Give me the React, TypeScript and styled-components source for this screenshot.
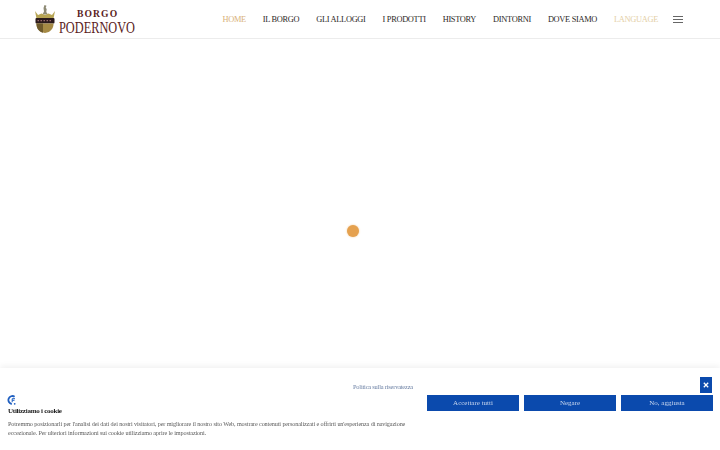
import React from "react";
import styled, { createGlobalStyle } from "styled-components";

const Global = createGlobalStyle`
  html, body { margin: 0; padding: 0; background: #fff; overflow: hidden; }
  body { font-family: "Liberation Serif", "Times New Roman", serif; }
  * { box-sizing: border-box; }
`;
const Page = styled.div`
  width: 720px; height: 450px; display: flex; flex-direction: column; background: #fff;
`;
const Header = styled.header`
  height: 39px; flex: none; display: flex; align-items: center;
  padding: 0 37px 1px 35px; border-bottom: 1px solid #ececec; background: #fff;
`;
const Logo = styled.a`
  display: flex; align-items: center; gap: 4px; width: 100px; height: 38px; flex: none;
`;
const Wordmark = styled.div`
  display: flex; flex-direction: column; width: 76px; color: #5a1c22; padding-top: 7px;
`;
const Borgo = styled.span`
  font-size: 9.6px; font-weight: 700; letter-spacing: 1.1px; line-height: 10px; margin-left: 18px; white-space: nowrap;
`;
const Podernovo = styled.span`
  display: block; font-size: 16px; line-height: 15px; margin-top: 1px; white-space: nowrap; transform: scaleX(0.77); transform-origin: left center;
`;
const Nav = styled.nav`
  margin-left: auto; display: flex; align-items: center; gap: 17px; padding-top: 1px;
`;
const NavLink = styled.a<{ $active?: boolean; $soft?: boolean }>`
  font-size: 8.4px; white-space: nowrap; letter-spacing: -0.32px; text-transform: uppercase;
  color: ${(p) => (p.$active ? "#d9b27a" : p.$soft ? "#e4cfa6" : "#2e2a27")};
`;
const Burger = styled.button`
  border: 0; background: none; padding: 0; margin-left: -2px; width: 10px; height: 7px;
  display: flex; flex-direction: column; justify-content: space-between;
  span { display: block; height: 1px; background: #666; }
`;
const Main = styled.main`flex: 1; background: #fff;`;
const Loader = styled.div`
  position: fixed; left: 347px; top: 225px; width: 12px; height: 12px; border-radius: 50%;
  background: #e5a14f; box-shadow: 0 0 2px #f0c48e;
`;
const Banner = styled.section`
  position: fixed; left: 0; right: 0; bottom: 0; height: 82px; background: #fff;
  box-shadow: 0 -2px 6px rgba(0,0,0,.06);
  display: grid; grid-template-columns: 1fr 286px; column-gap: 15px;
  padding: 9px 7px 0 8px;
`;
const Copy = styled.div`
  display: flex; flex-direction: column; padding-top: 18px; min-width: 0;
`;
const CookieMark = styled.svg`
  display: block; flex: none; margin-left: -1px;
`;
const Title = styled.h2`
  margin: 1px 0 3px; font-size: 7px; letter-spacing: -0.25px; line-height: 10px; font-weight: 700; color: #222;
`;
const Body = styled.p`
  margin: 0; font-size: 6.2px; letter-spacing: -0.12px; line-height: 9px; color: #5c5c5c; width: 398px;
`;
const Side = styled.div`display: flex; flex-direction: column;`;
const TopRow = styled.div`
  height: 18px; display: flex; align-items: flex-start; justify-content: flex-end; position: relative;
`;
const Policy = styled.a`
  position: absolute; left: -74px; top: 5px; font-size: 6.4px; letter-spacing: -0.2px; line-height: 10px; color: #6a7fa3; white-space: nowrap;
`;
const Close = styled.button`
  width: 12px; height: 16px; margin-right: 1px; border: 0; padding: 0; background: #0b4aad; display: flex; align-items: center; justify-content: center;
`;
const Buttons = styled.div`display: grid; grid-template-columns: repeat(3, 92px); gap: 5px;`;
const Action = styled.button`
  height: 16px; border: 0; padding: 0; background: #0b4aad; color: #c8d6ee;
  font-family: inherit; font-size: 7px;
`;

export default function App() {
  return (
    <Page>
      <Global />
      <Header>
        <Logo>
          <svg width="20" height="28" viewBox="0 0 20 28" style={{ flex: "none" }}>
            <path d="M9.5 0l2 .8-.8 2 1 1.2-.4 3 1.6 2.5H7.5L9 6.5 8.5 3z" fill="#8d8a74" />
            <path d="M0 6l3 4 3.5-1.5L10 10l3.500-1.500L17 10l3-4-1.500 7.500h-17z" fill="#b7a555" />
            <rect x="0.5" y="13" width="19" height="5.500" rx="1" fill="#2a1a1c" />
            <path d="M1.500 18.500h17c.2 5-3 8.800-8.500 9.500-5.500-.7-8.700-4.500-8.500-9.500z" fill="#a58a45" />
            <path d="M1.500 18.500H8V27.700c-4.300-1-6.700-4.500-6.500-9.200z" fill="#6e5a2c" />
            <path d="M2.500 15.700h15" stroke="#9a6a6b" strokeWidth="1.300" strokeDasharray="1.500 1.500" />
          </svg>
          <Wordmark>
            <Borgo>BORGO</Borgo>
            <Podernovo>PODERNOVO</Podernovo>
          </Wordmark>
        </Logo>
        <Nav>
          <NavLink $active>Home</NavLink>
          <NavLink>Il Borgo</NavLink>
          <NavLink>Gli alloggi</NavLink>
          <NavLink>I prodotti</NavLink>
          <NavLink>History</NavLink>
          <NavLink>Dintorni</NavLink>
          <NavLink>Dove siamo</NavLink>
          <NavLink $soft>Language</NavLink>
          <Burger aria-label="menu"><span /><span /><span /></Burger>
        </Nav>
      </Header>
      <Main />
      <Loader />
      <Banner>
        <Copy>
          <CookieMark width="9" height="10" viewBox="0 0 9 10">
            <path d="M7.600 1.700A4 4 0 1 0 4.800 9" fill="none" stroke="#1f5fc0" strokeWidth="1.800" />
            <path d="M8 3.700H5.200v3.500M5.200 5.300h2.300" fill="none" stroke="#1f5fc0" strokeWidth="1" />
            <circle cx="7.700" cy="8.800" r=".9" fill="#1f5fc0" />
          </CookieMark>
          <Title>Utilizziamo i cookie</Title>
          <Body>
            Potremmo posizionarli per l'analisi dei dati dei nostri visitatori, per migliorare il nostro sito Web, mostrare contenuti personalizzati e offrirti un'esperienza di navigazione eccezionale. Per ulteriori informazioni sui cookie utilizziamo aprire le impostazioni.
          </Body>
        </Copy>
        <Side>
          <TopRow>
            <Policy>Politica sulla riservatezza</Policy>
            <Close aria-label="chiudi">
              <svg width="6" height="6" viewBox="0 0 6 6"><path d="M.8.8l4.400 4.400M5.200.8L.8 5.200" stroke="#fff" strokeWidth="1.300" /></svg>
            </Close>
          </TopRow>
          <Buttons>
            <Action>Accettare tutti</Action>
            <Action>Negare</Action>
            <Action>No, aggiusta</Action>
          </Buttons>
        </Side>
      </Banner>
    </Page>
  );
}
